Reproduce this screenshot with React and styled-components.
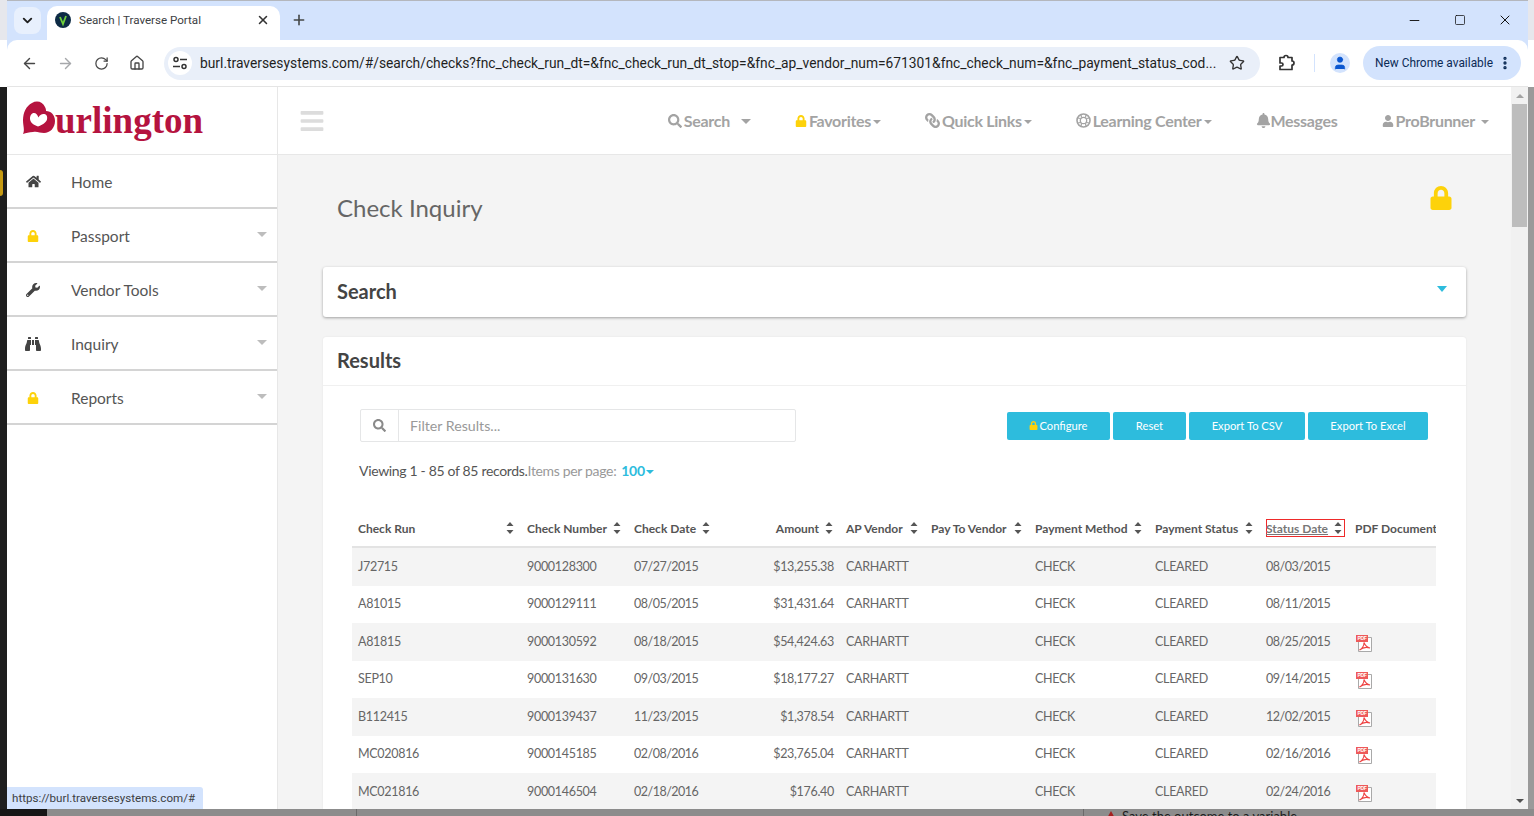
import React from 'react'
import styled, { createGlobalStyle } from 'styled-components'
import { FaHome, FaLock, FaWrench, FaBinoculars, FaSearch, FaLink, FaBell, FaUser, FaBars } from 'react-icons/fa'
import { ArrowLeft, ArrowRight, RotateCw, House, Star, X, Plus, Minus, Square, ChevronDown, EllipsisVertical, User } from 'lucide-react'

const Global = createGlobalStyle`
	html, body { margin: 0; padding: 0; overflow: hidden; }
	body { font-family: Lato, "Open Sans", sans-serif; color: #666; }
	* { box-sizing: border-box; }
`

const Desktop = styled.div`
	width: 1534px;
	height: 816px;
	display: flex;
	flex-direction: column;
	overflow: hidden;
	background: #8c8c8c;
`
const Upper = styled.div`
	display: flex;
	height: 809px;
`
const LeftEdge = styled.div`
	width: 7px;
	display: flex;
	flex-direction: column;
	background: linear-gradient(#e6e7ec 0, #e6e7ec 40px, #fff 40px, #fff 87px, #1e1e1e 87px);
`
const DockTag = styled.div`
	width: 3px;
	height: 26px;
	margin-top: 170px;
	border-radius: 0 3px 3px 0;
	background: #c69a12;
`
const RightEdge = styled.div`
	width: 6px;
	background: linear-gradient(#e6e7ec 0, #e6e7ec 40px, #fff 40px, #fff 87px, #9a9a9a 87px);
`
const Chrome = styled.div`
	width: 1521px;
	display: flex;
	flex-direction: column;
	background: #d3e3fd;
	border-top: 1px solid #b4b7bd;
`

const TabStrip = styled.div`
	height: 39px;
	display: flex;
	align-items: flex-end;
	padding-left: 7px;
`
const TabMenu = styled.div`
	width: 27px;
	height: 27px;
	margin: 0 6px 6px 0;
	border-radius: 8px;
	background: #e8f0fd;
	display: flex;
	align-items: center;
	justify-content: center;
	color: #1f1f1f;
`
const Tab = styled.div`
	width: 233px;
	height: 34px;
	background: #fff;
	border-radius: 10px 10px 0 0;
	display: flex;
	align-items: center;
	padding: 0 10px 6px 8px;
	font: 11.6px Roboto, sans-serif;
	color: #3c4043;
`
const Favicon = styled.svg`
	width: 16px;
	height: 16px;
	margin-right: 8px;
	flex: none;
`
const TabTitle = styled.span`
	flex: 1;
	white-space: nowrap;
`
const NewTab = styled.div`
	margin: 0 0 12px 11px;
	width: 16px;
	height: 16px;
	color: #444746;
`
const WindowControls = styled.div`
	margin-left: auto;
	display: flex;
	height: 38px;
	align-self: flex-start;
`
const WindowButton = styled.div`
	width: 45.5px;
	display: flex;
	align-items: center;
	justify-content: center;
	color: #111;
`

const Toolbar = styled.div`
	height: 47px;
	flex: none;
	background: #fff;
	border-radius: 10px 10px 0 0;
	display: flex;
	align-items: center;
	padding-left: 4px;
	border-bottom: 1px solid #e5e5e5;
`
const ToolButton = styled.div`
	width: 36px;
	height: 36px;
	flex: none;
	margin-left: ${p => p.$gap || 0}px;
	display: flex;
	align-items: center;
	justify-content: center;
	color: ${p => (p.$muted ? '#a6a8ab' : '#474747')};
`
const Address = styled.div`
	width: 1096px;
	height: 33px;
	margin-left: 9px;
	background: #e9eff9;
	border-radius: 17px;
	display: flex;
	align-items: center;
	padding-left: 4px;
	font: 13.8px Roboto, sans-serif;
	color: #1f1f1f;
`
const SiteInfo = styled.div`
	width: 24px;
	height: 24px;
	border-radius: 50%;
	background: #fff;
	margin-right: 8px;
	flex: none;
	display: flex;
	align-items: center;
	justify-content: center;
`
const Url = styled.span`
	width: 1019px;
	flex: none;
	white-space: nowrap;
	overflow: hidden;
`
const Divider = styled.div`
	width: 1px;
	height: 18px;
	margin: 0 15px 0 9px;
	background: #d3e3fd;
`
const Avatar = styled.div`
	width: 20px;
	height: 20px;
	border-radius: 50%;
	background: #d3e3fd;
	color: #0b57d0;
	display: flex;
	align-items: center;
	justify-content: center;
	margin-right: 13px;
	overflow: hidden;
`
const UpdatePill = styled.div`
	width: 158px;
	height: 34px;
	background: #d3e3fd;
	border-radius: 17px;
	display: flex;
	align-items: center;
	justify-content: space-between;
	padding: 0 8px 0 12px;
	font: 11.9px Roboto, sans-serif;
	color: #0b2a55;
	white-space: nowrap;
`

const Viewport = styled.div`
	position: relative;
	flex: 1;
	min-height: 0;
	display: flex;
	background: #fff;
	overflow: hidden;
`
const Sidebar = styled.aside`
	width: 271px;
	flex: none;
	background: #fff;
	border-right: 1px solid #e7e7e7;
`
const LogoBox = styled.div`
	height: 68px;
	padding: 13px 0 0 15px;
	display: flex;
	align-items: flex-start;
	border-bottom: 1px solid #e7e7e7;
`
const LogoMark = styled.svg`
	width: 36px;
	height: 36px;
	flex: none;
`
const LogoWord = styled.span`
	font: 700 37px/36px "Liberation Serif", serif;
	color: #b5133f;
	margin: 3px 0 0 -3px;
`
const NavItem = styled.div`
	height: 54px;
	display: flex;
	align-items: center;
	padding: 1px 10px 0 18px;
	border-bottom: 2px solid #d4d4d4;
	font-size: 15.5px;
	color: #555;
`
const NavIcon = styled.span`
	width: 16px;
	margin-right: 30px;
	display: flex;
	justify-content: center;
	color: ${p => p.$color || '#444'};
`
const NavCaret = styled.span`
	margin-left: auto;
	margin-top: -2px;
	width: 0;
	height: 0;
	border-left: 5px solid transparent;
	border-right: 5px solid transparent;
	border-top: 5px solid #bdbdbd;
`

const Main = styled.main`
	width: 1233px;
	flex: none;
	background: #f4f4f4;
	overflow: hidden;
`
const TopNav = styled.nav`
	height: 68px;
	background: #fff;
	border-bottom: 1px solid #e7e7e7;
	display: flex;
	align-items: center;
	justify-content: flex-end;
	gap: 44px;
	padding-right: 22px;
	position: relative;
`
const Burger = styled(FaBars)`
	position: absolute;
	left: 21px;
	top: 21px;
	color: #dcdcdc;
`
const TopItem = styled.div`
	display: flex;
	align-items: center;
	gap: ${p => (p.$tight ? 0 : 2)}px;
	font-size: 16px;
	font-weight: 700;
	color: #a3a3a3;
	letter-spacing: -0.3px;
	white-space: nowrap;
`
const LinkIcon = styled(FaLink)`
	transform: scaleX(-1);
`
const TopCaret = styled.span`
	width: 0;
	height: 0;
	margin-left: ${p => p.$gap ?? 0}px;
	margin-top: 2px;
	border-left: ${p => p.$size || 4}px solid transparent;
	border-right: ${p => p.$size || 4}px solid transparent;
	border-top: ${p => p.$size || 4}px solid #a3a3a3;
`
const Content = styled.div`
	padding: 0 45px;
`
const TitleRow = styled.div`
	height: 112px;
	display: flex;
	align-items: flex-start;
	justify-content: space-between;
	padding: 35px 13px 0 14px;
`
const Title = styled.h1`
	margin: 0;
	font-size: 24px;
	font-weight: 400;
	line-height: 36px;
	color: #666;
`
const TitleLock = styled(FaLock)`
	color: #fdd20a;
	margin: -4px 0 0 0;
`
const Card = styled.section`
	background: #fff;
	border-radius: 3px;
	box-shadow: ${p => (p.$flat ? '0 0 2px rgba(0,0,0,.08)' : '0 1px 3px rgba(0,0,0,.35)')};
	margin-bottom: 20px;
`
const CardHead = styled.div`
	height: ${p => p.$h}px;
	display: flex;
	align-items: center;
	justify-content: space-between;
	padding: 0 14px;
	border-bottom: ${p => (p.$line ? '1px solid #f0f0f0' : 'none')};
`
const CardTitle = styled.h2`
	margin: -3px 0 0;
	font-size: 20px;
	font-weight: 700;
	color: #444;
`
const CardCaret = styled.span`
	width: 0;
	height: 0;
	margin: -7px 5px 0 0;
	border-left: 5px solid transparent;
	border-right: 5px solid transparent;
	border-top: 6px solid #2dbcdd;
`
const CardBody = styled.div`
	padding: 23px 30px 0 29px;
`
const FilterRow = styled.div`
	display: flex;
	align-items: center;
	justify-content: space-between;
	padding: 0 8px;
`
const FilterBox = styled.div`
	width: 436px;
	height: 33px;
	display: flex;
	border: 1px solid #e5e6e7;
	border-radius: 2px;
	font-size: 14.2px;
	color: #999;
`
const FilterAddon = styled.div`
	width: 38px;
	display: flex;
	align-items: center;
	justify-content: center;
	border-right: 1px solid #e5e6e7;
	color: #8a8a8a;
`
const FilterText = styled.div`
	padding-left: 11px;
	line-height: 31px;
`
const Actions = styled.div`
	display: flex;
	gap: 3px;
`
const ActionButton = styled.div`
	width: ${p => p.$w}px;
	height: 28px;
	border-radius: 2px;
	background: #2dbcdd;
	color: #fff;
	font-size: 11.2px;
	display: flex;
	align-items: center;
	justify-content: center;
	gap: 1px;
`
const ViewingLine = styled.div`
	margin: 19px 0 29px 7px;
	line-height: 20px;
	font-size: 14px;
	color: #555;
	letter-spacing: -0.33px;
	display: flex;
	align-items: center;
`
const PerPageLabel = styled.span`
	color: #999;
	margin-right: 5px;
`
const PerPage = styled.span`
	color: #2dbcdd;
	font-weight: 700;
`
const PerPageCaret = styled.span`
	width: 0;
	height: 0;
	margin: 1px 0 0 1px;
	border-left: 4px solid transparent;
	border-right: 4px solid transparent;
	border-top: 4px solid #2dbcdd;
`

const columns = '169px 107px 89px 123px 85px 104px 120px 111px 89px 87px'
const HeadRow = styled.div`
	display: grid;
	grid-template-columns: ${columns};
	height: 38px;
	border-bottom: 2px solid #e3e3e3;
	align-items: center;
	overflow: hidden;
	font-size: 12px;
	font-weight: 700;
	color: #555;
`
const HeadCell = styled.div`
	padding: 0 6px;
	display: flex;
	align-items: center;
	justify-content: ${p => (p.$right ? 'flex-end' : 'space-between')};
	gap: 5px;
	white-space: nowrap;
`
const FocusBox = styled.div`
	flex: 1;
	height: 18px;
	margin-right: -2px;
	display: flex;
	align-items: center;
	justify-content: space-between;
	box-shadow: inset 0 0 0 1px #ee2a2a;
	padding-right: 2px;
	color: #777;
	text-decoration: underline;
`
const Row = styled.div`
	display: grid;
	grid-template-columns: ${columns};
	height: 37.5px;
	padding-bottom: 1px;
	align-items: center;
	background: ${p => (p.$odd ? '#f4f4f4' : '#fff')};
	font-size: 12.5px;
	letter-spacing: -0.3px;
	color: #666;
`
const Cell = styled.div`
	padding: 0 6px;
	text-align: ${p => (p.$right ? 'right' : 'left')};
	letter-spacing: ${p => (p.$date ? '-0.5px' : 'inherit')};
	white-space: nowrap;
`
const PdfIcon = styled.svg`
	width: 18px;
	height: 18px;
	display: block;
	margin-top: 3px;
`
const SortIcon = styled.svg`
	width: 10px;
	height: 14px;
	flex: none;
`

const ScrollTrack = styled.div`
	width: 17px;
	flex: none;
	background: #f1f1f1;
	display: flex;
	flex-direction: column;
	align-items: center;
`
const ScrollArrow = styled.div`
	height: 17px;
	display: flex;
	align-items: center;
	width: 0;
	&::before {
		content: '';
		display: block;
		flex: none;
		margin-left: -4px;
		border-left: 4px solid transparent;
		border-right: 4px solid transparent;
		border-${p => (p.$down ? 'top' : 'bottom')}: 4px solid ${p => (p.$down ? '#505050' : '#a3a3a3')};
	}
`
const ScrollThumb = styled.div`
	width: 15px;
	height: 123px;
	background: #bdbdbd;
	margin-bottom: auto;
`
const StatusTip = styled.div`
	position: absolute;
	left: 0;
	bottom: 0;
	height: 22px;
	width: 196px;
	padding-left: 5px;
	background: #d3e3fd;
	border-radius: 0 3px 0 0;
	font: 11.6px/22px Roboto, sans-serif;
	color: #3c4043;
	white-space: nowrap;
`

const BottomBand = styled.div`
	height: 7px;
	display: flex;
	overflow: hidden;
`
const BandPane = styled.div`
	width: ${p => p.$w}px;
	flex: ${p => (p.$w ? 'none' : 1)};
	background: ${p => p.$bg || '#8c8c8c'};
	border-right: ${p => (p.$line ? '1px solid #6a6a6a' : 'none')};
	padding-left: ${p => p.$pad || 0}px;
	display: flex;
	gap: 6px;
	font-size: 13px;
	line-height: 14px;
	color: #1c1c1c;
	white-space: nowrap;
`
const WarnTip = styled.span`
	width: 0;
	height: 0;
	margin-top: 2px;
	border-left: 5px solid transparent;
	border-right: 5px solid transparent;
	border-bottom: 9px solid #a52020;
`

const navItems = [
	{ label: 'Home', icon: <FaHome size={15} /> },
	{ label: 'Passport', icon: <FaLock size={12} />, color: '#fdd20a', caret: true },
	{ label: 'Vendor Tools', icon: <FaWrench size={14} />, caret: true },
	{ label: 'Inquiry', icon: <FaBinoculars size={18} />, caret: true },
	{ label: 'Reports', icon: <FaLock size={12} />, color: '#fdd20a', caret: true }
]

const headers = [
	{ label: 'Check Run' },
	{ label: 'Check Number' },
	{ label: 'Check Date' },
	{ label: 'Amount', right: true },
	{ label: 'AP Vendor' },
	{ label: 'Pay To Vendor' },
	{ label: 'Payment Method' },
	{ label: 'Payment Status' },
	{ label: 'Status Date', focused: true },
	{ label: 'PDF Document', plain: true }
]

const rows = [
	['J72715', '9000128300', '07/27/2015', '$13,255.38', '08/03/2015', false],
	['A81015', '9000129111', '08/05/2015', '$31,431.64', '08/11/2015', false],
	['A81815', '9000130592', '08/18/2015', '$54,424.63', '08/25/2015', true],
	['SEP10', '9000131630', '09/03/2015', '$18,177.27', '09/14/2015', true],
	['B112415', '9000139437', '11/23/2015', '$1,378.54', '12/02/2015', true],
	['MC020816', '9000145185', '02/08/2016', '$23,765.04', '02/16/2016', true],
	['MC021816', '9000146504', '02/18/2016', '$176.40', '02/24/2016', true]
]

const Sort = () => (
	<SortIcon viewBox="0 0 10 14">
		<path d="M5 1 8.5 5h-7zM5 13 1.5 9h7z" fill="#555" />
	</SortIcon>
)

const Pdf = () => (
	<PdfIcon viewBox="0 0 18 18">
		<path d="M3.500 3.500h13v14h-13z" fill="#fff" stroke="#a9a9a9" />
		<path d="M1 1h12v7H1z" fill="#ee5a5a" />
		<text x="2.400" y="6.400" fontSize="5" fontWeight="700" fill="#fff" fontFamily="Liberation Sans, sans-serif">PDF</text>
		<path d="M9 8.500c.2 3-2 6.500-4.500 7.500 3-2.500 7.500-3 10.500-2-2.500-.5-5-3-6-5.500z" fill="none" stroke="#ee4444" strokeWidth="1.100" />
	</PdfIcon>
)

const LifeRing = () => (
	<svg width="15" height="15" viewBox="0 0 15 15" fill="none" stroke="currentColor">
		<circle cx="7.500" cy="7.500" r="6.500" strokeWidth="1.600" />
		<circle cx="7.500" cy="7.500" r="3.200" strokeWidth="1.300" />
		<path d="M5 1.500 5.500 4.500M10 1.500 9.500 4.500M5 13.500 5.500 10.500M10 13.500 9.500 10.500M1.500 5 4.500 5.500M1.500 10 4.500 9.500M13.500 5 10.500 5.500M13.500 10 10.500 9.500" strokeWidth="1.200" />
	</svg>
)

const Extensions = () => (
	<svg width="18" height="18" viewBox="0 0 18 18" fill="none" stroke="#333" strokeWidth="1.700" strokeLinejoin="round">
		<path d="M2 3.500h4a2 2 0 0 1 4 0h4v3.500a2 2 0 0 1 0 4v4.500H2v-3.500h1.500a1.500 1.500 0 0 0 0-3H2z" />
	</svg>
)

const TabBar = () => (
	<TabStrip>
		<TabMenu><ChevronDown size={15} strokeWidth={3} /></TabMenu>
		<Tab>
			<Favicon viewBox="0 0 16 16">
				<circle cx="8" cy="8" r="8" fill="#0d2b45" />
				<path d="M5 5l3 7 3-8" fill="none" stroke="#6fd13c" strokeWidth="1.800" />
			</Favicon>
			<TabTitle>Search | Traverse Portal</TabTitle>
			<X size={14} strokeWidth={2.6} color="#333" />
		</Tab>
		<NewTab><Plus size={16} strokeWidth={2.4} /></NewTab>
		<WindowControls>
			<WindowButton><Minus size={15} strokeWidth={1.500} /></WindowButton>
			<WindowButton><Square size={12} strokeWidth={1.500} /></WindowButton>
			<WindowButton><X size={16} strokeWidth={1.500} /></WindowButton>
		</WindowControls>
	</TabStrip>
)

const BrowserBar = () => (
	<Toolbar>
		<ToolButton><ArrowLeft size={17} strokeWidth={2} /></ToolButton>
		<ToolButton $muted><ArrowRight size={17} strokeWidth={2} /></ToolButton>
		<ToolButton><RotateCw size={15} strokeWidth={2} /></ToolButton>
		<ToolButton><House size={16} strokeWidth={2} /></ToolButton>
		<Address>
			<SiteInfo>
				<svg width="16" height="14" viewBox="0 0 16 14" fill="none" stroke="#333" strokeWidth="1.500">
					<circle cx="4" cy="3.500" r="2" />
					<path d="M8 3.500h7M1 10.500h7" />
					<circle cx="12" cy="10.500" r="2" />
				</svg>
			</SiteInfo>
			<Url>burl.traversesystems.com/#/search/checks?fnc_check_run_dt=&amp;fnc_check_run_dt_stop=&amp;fnc_ap_vendor_num=671301&amp;fnc_check_num=&amp;fnc_payment_status_cod...</Url>
			<ToolButton><Star size={16} strokeWidth={2} color="#333" /></ToolButton>
		</Address>
		<ToolButton $gap={9}><Extensions /></ToolButton>
		<Divider />
		<Avatar><User size={16} fill="currentColor" strokeWidth={1} /></Avatar>
		<UpdatePill>
			New Chrome available
			<EllipsisVertical size={16} strokeWidth={3} />
		</UpdatePill>
	</Toolbar>
)

const SideMenu = () => (
	<Sidebar>
		<LogoBox>
			<LogoMark viewBox="0 0 36 36">
				<path
					fillRule="evenodd"
					fill="#b5133f"
					d="M1 34C3 30 1 26 1 20 1 13 4 6 10 3c5-3 11-1 13 4 1 2 1 3 1 4 5 0 9 4 9 10 0 7-5 12-11 12-4 0-7-2-11-1-4 0-7 1-10 2zM16 26.500C11 25 8 22 8 18.500c0-3 1.500-5.500 4-5.500 2 0 3.500 2 4.500 4.500 1-2.500 3.500-4 6-3.500 2.500.5 3 3 2.500 5.500-1 3.500-5 5.500-9 7z"
				/>
			</LogoMark>
			<LogoWord>urlington</LogoWord>
		</LogoBox>
		{navItems.map(item => (
			<NavItem key={item.label}>
				<NavIcon $color={item.color}>{item.icon}</NavIcon>
				{item.label}
				{item.caret && <NavCaret />}
			</NavItem>
		))}
	</Sidebar>
)

const PortalNav = () => (
	<TopNav>
		<Burger size={26} />
		<TopItem><FaSearch size={14} />Search<TopCaret $gap={9} $size={5} /></TopItem>
		<TopItem><FaLock size={12} color="#fdd20a" />Favorites<TopCaret /></TopItem>
		<TopItem><LinkIcon size={15} />Quick Links<TopCaret /></TopItem>
		<TopItem><LifeRing />Learning Center<TopCaret /></TopItem>
		<TopItem $tight><FaBell size={15} />Messages</TopItem>
		<TopItem><FaUser size={12} />ProBrunner<TopCaret $gap={4} /></TopItem>
	</TopNav>
)

const ResultsTable = () => (
	<div>
		<HeadRow>
			{headers.map(h => (
				<HeadCell key={h.label} $right={h.right}>
					{h.focused ? (
						<FocusBox>{h.label}<Sort /></FocusBox>
					) : (
						<>
							{h.label}
							{!h.plain && <Sort />}
						</>
					)}
				</HeadCell>
			))}
		</HeadRow>
		{rows.map((r, i) => (
			<Row key={r[1]} $odd={i % 2 === 0}>
				<Cell>{r[0]}</Cell>
				<Cell>{r[1]}</Cell>
				<Cell $date>{r[2]}</Cell>
				<Cell $right>{r[3]}</Cell>
				<Cell>CARHARTT</Cell>
				<Cell />
				<Cell>CHECK</Cell>
				<Cell>CLEARED</Cell>
				<Cell $date>{r[4]}</Cell>
				<Cell>{r[5] && <Pdf />}</Cell>
			</Row>
		))}
	</div>
)

export default function App() {
	return (
		<Desktop>
			<Global />
			<Upper>
				<LeftEdge><DockTag /></LeftEdge>
				<Chrome>
					<TabBar />
					<BrowserBar />
					<Viewport>
						<SideMenu />
						<Main>
							<PortalNav />
							<Content>
								<TitleRow>
									<Title>Check Inquiry</Title>
									<TitleLock size={24} />
								</TitleRow>
								<Card>
									<CardHead $h={50}>
										<CardTitle>Search</CardTitle>
										<CardCaret />
									</CardHead>
								</Card>
								<Card $flat>
									<CardHead $h={49} $line>
										<CardTitle>Results</CardTitle>
									</CardHead>
									<CardBody>
										<FilterRow>
											<FilterBox>
												<FilterAddon><FaSearch size={13} /></FilterAddon>
												<FilterText>Filter Results...</FilterText>
											</FilterBox>
											<Actions>
												<ActionButton $w={103}><FaLock size={9} color="#fdd20a" />Configure</ActionButton>
												<ActionButton $w={73}>Reset</ActionButton>
												<ActionButton $w={116}>Export To CSV</ActionButton>
												<ActionButton $w={120}>Export To Excel</ActionButton>
											</Actions>
										</FilterRow>
										<ViewingLine>
											Viewing 1 - 85 of 85 records.
											<PerPageLabel>Items per page:</PerPageLabel>
											<PerPage>100</PerPage>
											<PerPageCaret />
										</ViewingLine>
										<ResultsTable />
									</CardBody>
								</Card>
							</Content>
						</Main>
						<ScrollTrack>
							<ScrollArrow />
							<ScrollThumb />
							<ScrollArrow $down />
						</ScrollTrack>
						<StatusTip>https://burl.traversesystems.com/#</StatusTip>
					</Viewport>
				</Chrome>
				<RightEdge />
			</Upper>
			<BottomBand>
				<BandPane $w={47} $bg="#161616" />
				<BandPane $w={310} $line />
				<BandPane $w={727} $line />
				<BandPane $pad={22}><WarnTip />Save the outcome to a variable</BandPane>
			</BottomBand>
		</Desktop>
	)
}
